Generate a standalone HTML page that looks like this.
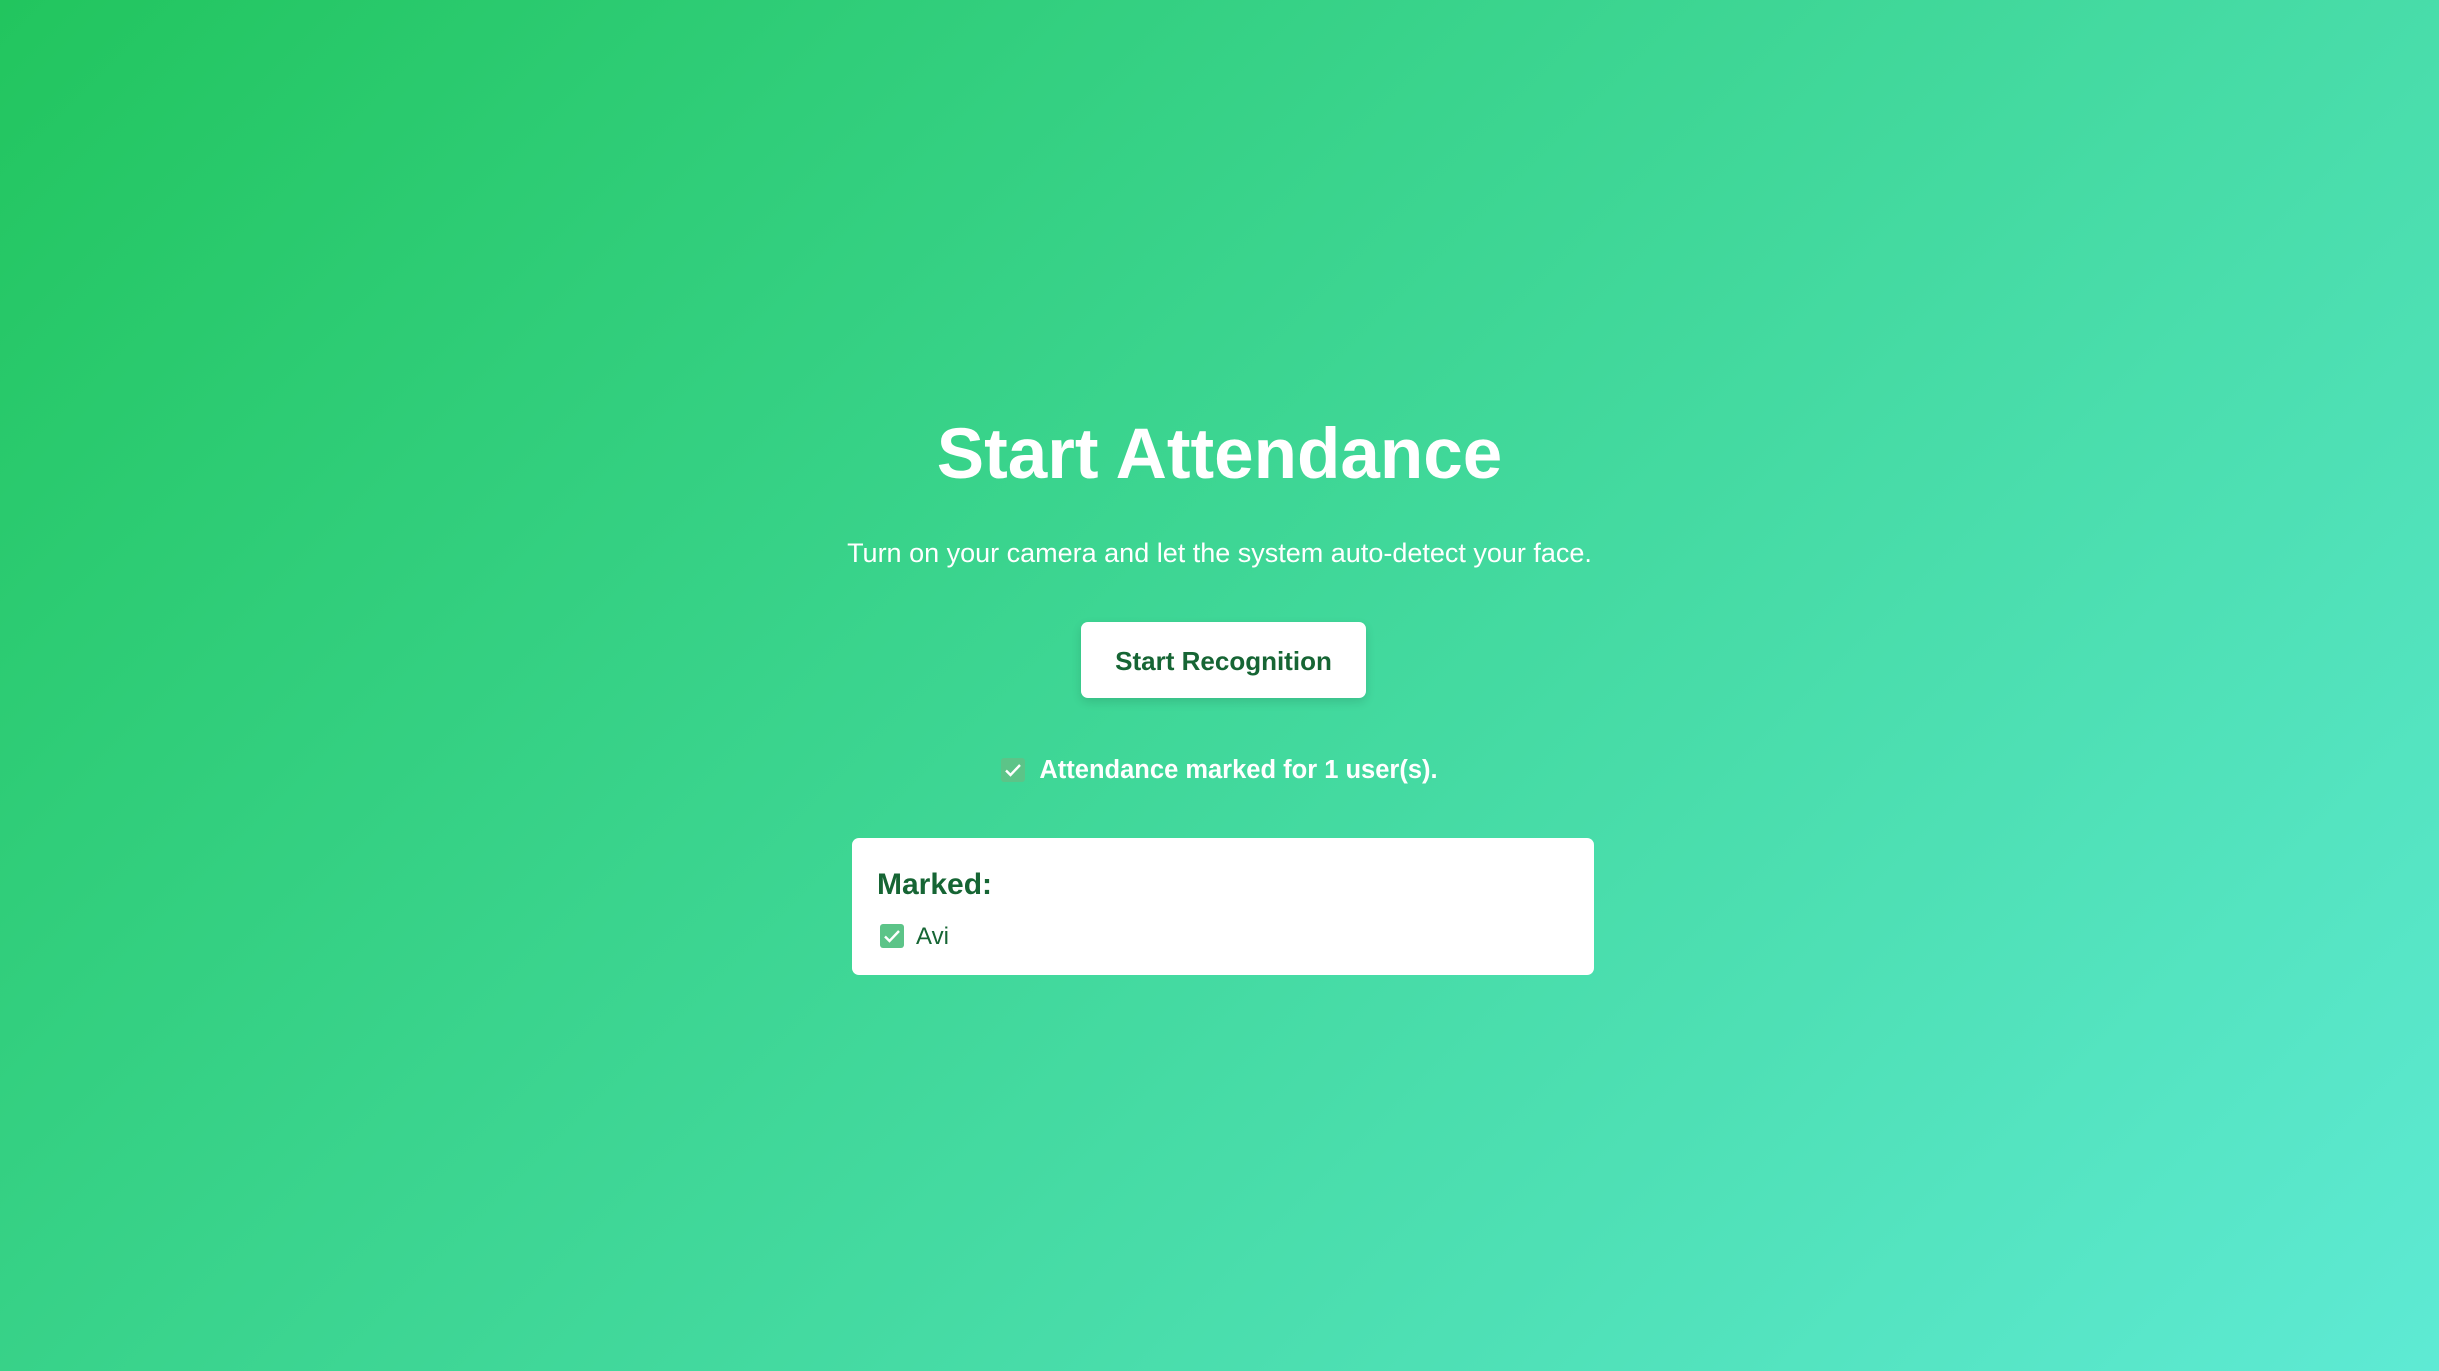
<!DOCTYPE html>
<html><head><meta charset="utf-8"><style>
html,body{margin:0;padding:0}
body{width:2439px;height:1371px;background:linear-gradient(135deg,#22c55e 0%,#5eead4 100%);font-family:"Liberation Sans",sans-serif;position:relative;overflow:hidden;color:#fff}
.c{position:absolute;left:0;width:2439px;text-align:center;white-space:nowrap}
h1{margin:0;font-size:71px;font-weight:bold;top:414px}
.sub{font-size:27px;top:538px}
.btn{position:absolute;left:1081px;top:622px;width:285px;height:76px;background:#fff;border-radius:7px;box-shadow:0 4px 10px rgba(0,0,0,.12);color:#166534;font-weight:bold;font-size:26px;line-height:78px;text-align:center}
.st{font-size:25.5px;font-weight:bold;top:756px}
.chk{display:inline-block;width:24px;height:24px;background:#5cc488;border-radius:3px;vertical-align:-4px;position:relative;margin-right:14px}
.chk svg{position:absolute;left:0;top:0}
.card{position:absolute;left:852px;top:838px;width:742px;height:137px;background:#fff;border-radius:7px;color:#166534}
.card .h{position:absolute;left:25px;top:30px;font-size:30px;font-weight:bold}
.av{position:absolute;left:28px;top:85px;font-size:24px}
</style></head><body>
<h1 class="c">Start Attendance</h1>
<div class="c sub">Turn on your camera and let the system auto-detect your face.</div>
<div class="btn">Start Recognition</div>
<div class="c st"><span class="chk"><svg width="24" height="24" viewBox="0 0 24 24"><path d="M5 12.5l4.5 4.5L19 7" stroke="#fff" stroke-width="2.4" fill="none"/></svg></span>Attendance marked for 1 user(s).</div>
<div class="card"><div class="h">Marked:</div>
<div class="av"><span class="chk" style="margin-right:12px"><svg width="24" height="24" viewBox="0 0 24 24"><path d="M5 12.5l4.5 4.5L19 7" stroke="#fff" stroke-width="2.4" fill="none"/></svg></span>Avi</div></div>
</body></html>
